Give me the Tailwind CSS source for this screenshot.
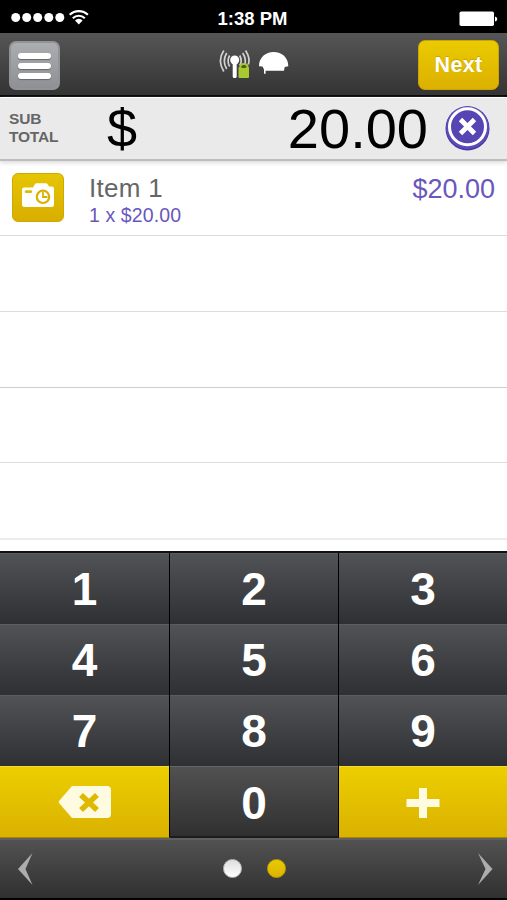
<!DOCTYPE html>
<html lang="en">
<head>
    <meta charset="UTF-8">
    <meta name="viewport" content="width=device-width, initial-scale=1.0">
    <title>Register</title>
    <script src="https://cdn.jsdelivr.net/npm/@tailwindcss/browser@4"></script>
</head>
<body class="bg-black font-['Liberation_Sans',Arial,sans-serif]">
    <div class="w-[507px] h-[900px] flex flex-col overflow-hidden bg-white">
        <!-- Status bar -->
        <div class="h-[33px] shrink-0 bg-black text-white grid grid-cols-3 items-center">
            <div class="flex items-center pl-[11px] pb-px">
                <svg class="w-[80px] h-[20px]" viewBox="0 0 80 20" fill="#fff">
                    <circle cx="4.7" cy="10.5" r="4.5"/>
                    <circle cx="15.7" cy="10.5" r="4.5"/>
                    <circle cx="26.7" cy="10.5" r="4.5"/>
                    <circle cx="37.8" cy="10.5" r="4.5"/>
                    <circle cx="48.8" cy="10.5" r="4.5"/>
                    <g fill="none" stroke="#fff" stroke-width="2.1">
                        <path d="M58.7 7.8a13 13 0 0 1 18.2 0"/>
                        <path d="M61.8 11.3a8.5 8.5 0 0 1 12 0"/>
                    </g>
                    <path d="M64 13.5a5.2 5.2 0 0 1 7.6 0L67.8 17.5z"/>
                </svg>
            </div>
            <div class="text-center text-[18.5px] leading-[33px] pt-[2px] pr-[2px] font-bold">1:38 PM</div>
            <div class="flex justify-end pr-[8px] pt-[2px]">
                <svg class="w-[40px] h-[16px]" viewBox="0 0 40 16" fill="#fff">
                    <rect x="0.5" y="0.5" width="34.5" height="14.5" rx="1.8"/>
                    <path d="M36 5.5q2.3.5 2.3 2.5t-2.3 2.5z"/>
                </svg>
            </div>
        </div>

        <!-- Header -->
        <div class="h-[64px] shrink-0 flex items-start justify-between border-b-2 border-black bg-linear-to-b from-[#565656] to-[#343434] pl-[9px] pr-[8px]">
            <button class="mt-[8px] w-[51px] h-[49px] rounded-[7px] border-2 border-[#919396] bg-linear-to-b from-[#acadb0] to-[#8e9093] flex flex-col items-center justify-center gap-[4px]">
                <span class="w-[33px] h-[6px] rounded-full bg-white shadow-[0_1px_1px_#66686b]"></span>
                <span class="w-[33px] h-[6px] rounded-full bg-white shadow-[0_1px_1px_#66686b]"></span>
                <span class="w-[33px] h-[6px] rounded-full bg-white shadow-[0_1px_1px_#66686b]"></span>
            </button>
            <svg class="mt-[13px] mr-[-42px] w-[100px] h-[36px]" viewBox="210 46 100 36">
                <!-- antenna -->
                <g fill="none" stroke="#d2d2d2" stroke-width="1.7">
                    <path d="M223.8 50.5q-6.8 10 0 21"/>
                    <path d="M226.7 53q-4.8 8 0 16"/>
                    <path d="M229.6 55.5q-3 5.5 0 11"/>
                    <path d="M239.7 55.5q3 5.5 0 10"/>
                    <path d="M242.6 53q4.2 6 2 12"/>
                    <path d="M245.6 50.5q5 8 2.8 14"/>
                </g>
                <circle cx="234.7" cy="60" r="4.5" fill="#fff"/>
                <rect x="232.7" y="61" width="4" height="17" rx="1.5" fill="#fff"/>
                <!-- lock -->
                <path d="M240.5 68v-1.5q0-2.5 3.5-2.5t3.5 2.5v1.5" fill="none" stroke="#a9c931" stroke-width="2"/>
                <rect x="238.5" y="67" width="10.5" height="11" rx="1" fill="#a9c931"/>
                <rect x="241.5" y="66" width="4.5" height="2" fill="#4f6214"/>
                <!-- reader -->
                <path d="M259 66.200C259 57.500 265.500 52 273.700 52S288.300 57.500 288.300 66.200L284.700 67 284 70.800H265.600V73.800H264V69.500L262.500 66.600z" fill="#fff"/>
            </svg>
            <button class="mt-[7px] w-[81px] h-[50px] rounded-[7px] border border-[#cba400] bg-linear-to-b from-[#eacb00] to-[#dcb000] text-white text-[21.5px] leading-[46px] font-bold tracking-[0.3px] [text-shadow:0_-1px_1px_#c79e00]">Next</button>
        </div>

        <!-- Subtotal -->
        <div class="h-[64px] shrink-0 flex items-center bg-[#eaeaea] border-t border-b-2 border-t-white border-b-[#bdbdbd] shadow-[0_2px_4px_#ddd] pl-[9px] pr-[17px] pb-[1px]">
            <div class="w-[98px] text-[15.5px] leading-[18.5px] font-bold text-[#666] tracking-[-0.2px]">SUB<br>TOTAL</div>
            <div class="text-[54px] leading-[60px] pb-px text-black">$</div>
            <div class="flex-1 text-right text-[56px] leading-[60px] pt-px text-black pr-[17px]">20.00</div>
            <svg class="w-[45px] h-[46px] shrink-0" viewBox="0 0 45 46">
                <circle cx="22.5" cy="23.5" r="22" fill="#4936a3"/>
                <circle cx="22.5" cy="22.5" r="21.5" fill="#5d4bb8"/>
                <circle cx="22.5" cy="21.8" r="18" fill="#5645b2" stroke="#fff" stroke-width="3"/>
                <path d="M15.5 14.5l14 14M29.5 14.5l-14 14" stroke="#fff" stroke-width="4.8"/>
            </svg>
        </div>

        <!-- Items -->
        <div class="h-[75px] shrink-0 flex items-start border-b border-[#dcdcdc] pl-[12px] pr-[12px]">
            <div class="mt-[12px] w-[52px] h-[49px] rounded-[6px] border border-[#d0a900] bg-linear-to-b from-[#e5c500] to-[#d9ae00] flex items-center justify-center">
                <svg class="w-[34px] h-[26px] mt-[-5px]" viewBox="0 0 34 26">
                    <path d="M3 5.5H12L14 2Q14.5 1.2 15.5 1.2H25Q26 1.2 26.5 2L28 4.5H31Q33 4.5 33 6.5V22.5Q33 25 30.5 25H3.5Q1 25 1 22.5V7.5Q1 5.5 3 5.5z" fill="#fff"/>
                    <rect x="3.7" y="8.3" width="7.5" height="2.8" rx="1.4" fill="#dfbc00"/>
                    <circle cx="22" cy="14.8" r="6.2" fill="#fff" stroke="#d9b100" stroke-width="2.2"/>
                    <path d="M22 10V15H26.5" fill="none" stroke="#d9b100" stroke-width="1.8"/>
                </svg>
            </div>
            <div class="ml-[25px] mt-[11px] flex-1">
                <div class="text-[26px] leading-[32px] tracking-[0.3px] text-[#666]">Item 1</div>
                <div class="text-[19.5px] leading-[22px] tracking-[0.1px] text-[#6a57bd]">1 x $20.00</div>
            </div>
            <div class="mt-[12px] text-[27px] leading-[33px] text-[#6a57bd]">$20.00</div>
        </div>
        <div class="h-[76px] shrink-0 border-b border-[#dcdcdc]"></div>
        <div class="h-[76px] shrink-0 border-b border-[#cfcfcf]"></div>
        <div class="h-[75px] shrink-0 border-b border-[#dcdcdc]"></div>
        <div class="h-[77px] shrink-0 border-b-2 border-[#ececec]"></div>
        <div class="h-[11px] shrink-0"></div>

        <!-- Keypad -->
        <div id="keypad" class="h-[287px] shrink-0 grid grid-cols-[170px_169px_168px] grid-rows-[71px_71px_71px_72px] border-t-2 border-[#111214] bg-black text-white text-[46px] leading-[70px] text-center font-bold">
        </div>

        <!-- Pager -->
        <div class="h-[62px] shrink-0 flex items-center justify-between border-t-2 border-b-2 border-t-[#606060] border-b-black bg-linear-to-b from-[#525252] to-[#303030] pl-[12px] pr-[8px] pb-px">
            <svg class="w-[26px] h-[34px]" viewBox="0 0 26 34">
                <path d="M20.5 1L6 17 20.5 33 13.5 17z" fill="#adadad"/>
            </svg>
            <div class="flex gap-[25px] mr-[3px]">
                <span class="w-[19px] h-[19px] rounded-full border border-[#bbb] bg-linear-to-b from-[#dedede] to-white"></span>
                <span class="w-[19px] h-[19px] rounded-full border border-[#c39d00] bg-linear-to-b from-[#e9cb00] to-[#dcb300]"></span>
            </div>
            <svg class="w-[26px] h-[34px]" viewBox="0 0 26 34">
                <path d="M5 1L19.5 17 5 33 12.5 17z" fill="#adadad"/>
            </svg>
        </div>
    </div>
    <script>
        const DIGIT_CLASS = 'border-r border-black bg-linear-to-b from-[#525356] to-[#2f3033] shadow-[inset_0_1px_0_#5c5d60]';
        const ZERO_CLASS = 'border-r border-b-2 border-black border-b-[#1c1c1c] bg-linear-to-b from-[#525252] to-[#303030] shadow-[inset_0_1px_0_#666] pt-[2px]';
        const ACTION_CLASS = 'border-black border-b border-b-[#a88800] bg-linear-to-b from-[#eccf00] to-[#dab100] shadow-[inset_0_1px_0_#f4dc38] flex items-center justify-center';

        const ICONS = {
            back: `<svg class="w-[54px] h-[34px]" viewBox="0 0 54 34">
                <path d="M14 1H49Q53 1 53 5V29Q53 33 49 33H14L1 18Q.5 17 1 16z" fill="#fffbe0"/>
                <path d="M23 10l16 15M39 10l-16 15" stroke="#dfb900" stroke-width="5.6"/>
            </svg>`,
            plus: `<svg class="w-[34px] h-[30px] mt-[2px]" viewBox="0 0 34 30">
                <path d="M13 0h8v11h12.500v8H21v11h-8V19H.5v-8H13z" fill="#fffbe0"/>
            </svg>`
        };

        const keys = ['1', '2', '3', '4', '5', '6', '7', '8', '9', 'back', '0', 'plus'];
        const keypad = document.getElementById('keypad');

        keys.forEach((key, i) => {
            const button = document.createElement('button');
            if (ICONS[key]) {
                button.className = ACTION_CLASS + (key === 'back' ? ' border-r' : '');
                button.innerHTML = ICONS[key];
            } else {
                button.className = key === '0' ? ZERO_CLASS : DIGIT_CLASS;
                button.textContent = key;
            }
            // last column runs to the edge of the screen
            if (i % 3 === 2) button.classList.remove('border-r');
            keypad.appendChild(button);
        });
    </script>
</body>
</html>
